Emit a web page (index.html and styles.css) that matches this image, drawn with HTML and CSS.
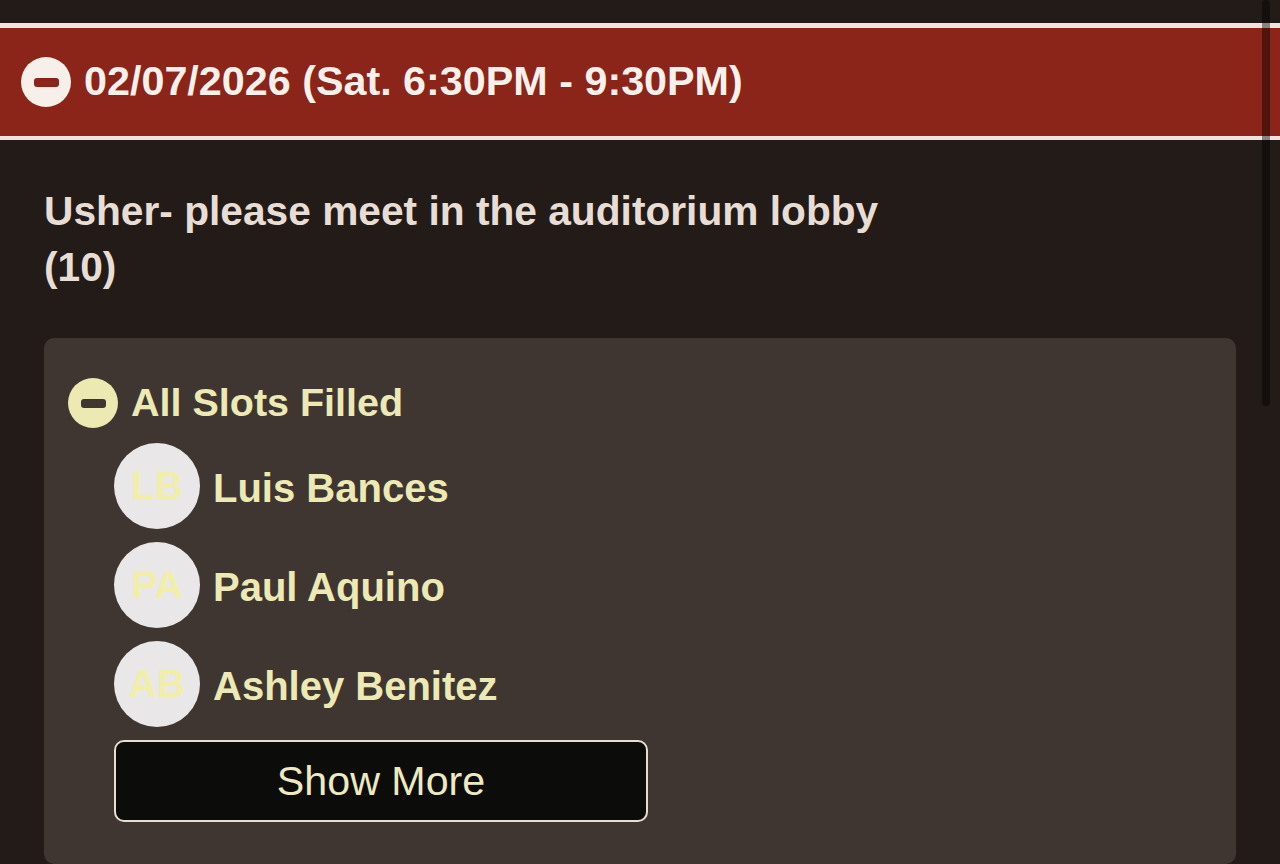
FILE: index.html
```html
<!DOCTYPE html>
<html lang="en">
<head>
<meta charset="utf-8">
<title>Signup</title>
<link rel="stylesheet" href="styles.css">
</head>
<body>
<div class="page">
  <div class="top-gap"></div>
  <div class="date-band">
    <span class="toggle toggle-light"><span class="bar bar-red"></span></span>
    <h1 class="date-title">02/07/2026 (Sat. 6:30PM - 9:30PM)</h1>
  </div>
  <div class="content">
    <p class="desc">Usher- please meet in the auditorium lobby (10)</p>
    <section class="card">
      <div class="slots-head">
        <span class="toggle toggle-yellow"><span class="bar bar-dark"></span></span>
        <h2 class="slots-title">All Slots Filled</h2>
      </div>
      <ul class="people">
        <li class="person"><span class="avatar">LB</span><span class="name">Luis Bances</span></li>
        <li class="person"><span class="avatar">PA</span><span class="name">Paul Aquino</span></li>
        <li class="person"><span class="avatar">AB</span><span class="name">Ashley Benitez</span></li>
      </ul>
      <button class="show-more" type="button">Show More</button>
    </section>
  </div>
</div>
<div class="scrollbar"></div>
</body>
</html>
```

FILE: styles.css
```css
html, body {
  margin: 0;
  padding: 0;
  height: 100%;
  overflow: hidden;
}
body {
  background: #231b18;
  font-family: "Liberation Sans", Arial, Helvetica, sans-serif;
}
.page {
  display: flex;
  flex-direction: column;
}
.top-gap {
  height: 23px;
}
.date-band {
  height: 108px;
  background: #8b2419;
  border-top: 5px solid #efe2df;
  border-bottom: 4px solid #efe2df;
  display: flex;
  align-items: center;
  padding-left: 21px;
  gap: 13px;
  box-sizing: content-box;
}
.toggle {
  width: 50px;
  height: 50px;
  border-radius: 50%;
  display: flex;
  align-items: center;
  justify-content: center;
  flex-shrink: 0;
}
.toggle-light {
  background: #f7efea;
}
.toggle-yellow {
  background: #ede9b3;
}
.bar {
  width: 25px;
  height: 9px;
  border-radius: 3px;
}
.bar-red {
  background: #8b2419;
}
.bar-dark {
  background: #3f3632;
}
.date-title {
  margin: 0;
  font-size: 41.3px;
  font-weight: 700;
  color: #f8f0ea;
  line-height: 1;
}
.content {
  padding: 43px 44px 0 44px;
}
.desc {
  margin: 0;
  max-width: 890px;
  font-size: 40.7px;
  line-height: 56px;
  font-weight: 700;
  color: #e8ddd5;
}
.card {
  margin-top: 43px;
  background: #3f3632;
  border-radius: 10px;
  padding: 40px 24px 42px 24px;
}
.slots-head {
  display: flex;
  align-items: center;
  gap: 13px;
  height: 50px;
}
.slots-title {
  margin: 0;
  font-size: 39.5px;
  font-weight: 700;
  color: #ede9b4;
  line-height: 1;
}
.people {
  list-style: none;
  margin: 15px 0 0 0;
  padding: 0 0 0 46px;
  display: flex;
  flex-direction: column;
  gap: 13px;
}
.person {
  display: flex;
  align-items: center;
  gap: 13px;
}
.avatar {
  width: 86px;
  height: 86px;
  border-radius: 50%;
  background: #e9e7e7;
  color: #f1eeaa;
  font-size: 39px;
  font-weight: 700;
  display: flex;
  align-items: center;
  justify-content: center;
  flex-shrink: 0;
}
.name {
  font-size: 40px;
  font-weight: 700;
  color: #ede9b4;
  line-height: 1;
  padding-top: 3px;
}
.show-more {
  display: block;
  margin: 13px 0 0 46px;
  width: 534px;
  height: 82px;
  background: #0c0c0a;
  border: 2px solid #e7ddd1;
  border-radius: 10px;
  color: #eeeac0;
  font-family: "Liberation Sans", Arial, Helvetica, sans-serif;
  font-size: 41.2px;
  font-weight: 400;
  cursor: pointer;
}
.scrollbar {
  position: fixed;
  top: 0;
  left: 1262px;
  width: 8px;
  height: 406px;
  border-radius: 4px;
  background: rgba(0, 0, 0, 0.42);
}
```
